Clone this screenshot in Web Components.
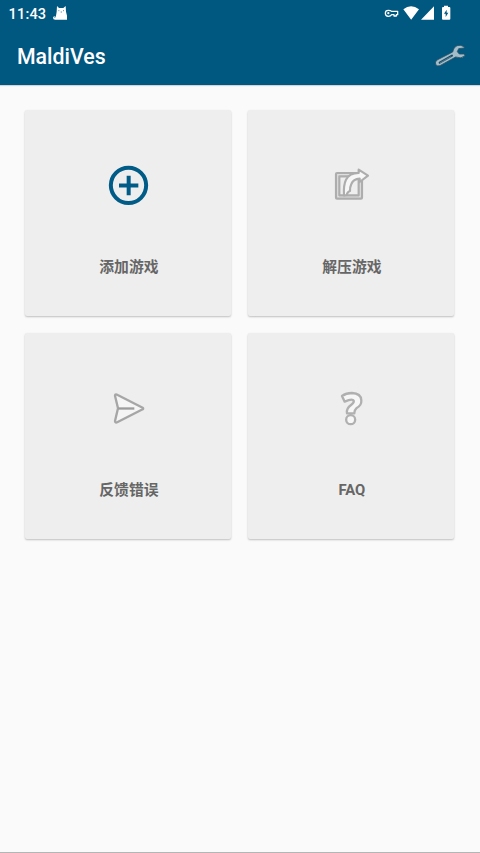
<!DOCTYPE html>
<html lang="zh-CN"><head><meta charset="utf-8"><title>MaldiVes</title>
<style>html,body{margin:0;height:100%;background:#fafafa}</style></head>
<body><maldives-app></maldives-app>
<script>
const define = (name, html) => {
  const t = document.createElement('template');
  t.innerHTML = html;
  customElements.define(name, class extends HTMLElement {
    constructor() {
      super();
      this.attachShadow({mode: 'open'}).append(t.content.cloneNode(true));
    }
  });
};

define('status-bar', `
<style>
:host{display:flex;align-items:center;height:27px;padding:0 28px 0 8.5px;box-sizing:border-box;color:#fff;font:500 14.5px/27px Roboto,sans-serif}
svg{display:block;flex:none}
.cat{margin-left:6px}
.right{margin-left:auto}
span{letter-spacing:.2px;padding-top:1px}
</style>
<span>11:43</span>
<svg class="cat" width="16" height="27" viewBox="157 0 48 81"><path fill="#fff" d="M172 18L178 24H191L198 18L199 35L202 47V59H169Q160 60 160 53Q161 48 166 48Q162 52 166 54L169 47L171 35Z"/><path stroke="#005780" stroke-width="2" d="M176 32h3M190 32h3M183 36h4"/></svg>
<svg class="right" width="68" height="27" viewBox="42 0 204 81">
<g fill="none" stroke="#fff" stroke-width="3.8" stroke-linejoin="round"><path d="M65 34H83V44H79V48H72V44H65Q62 49 55 49Q46 48 46 39.500Q46 31 55 31Q62 31 65 34Z"/></g><circle cx="55" cy="39.500" r="3.400" fill="#fff"/>
<path fill="#fff" d="M100 28Q123 10 147 28L123.500 59ZM153 59L192 19V59Z"/>
<path fill="#fff" fill-rule="evenodd" d="M222 17H234V21H238Q241 21 241 24V56Q241 59 238 59H219Q216 59 216 56V24Q216 21 219 21H222ZM230 29L222 41H227V51L235 38H230Z"/>
</svg>`);

define('app-toolbar', `
<style>
:host{display:flex;align-items:center;justify-content:space-between;height:58px;padding:0 7px 0 17px;box-sizing:border-box;color:#fff;font:500 21.3px/58px Roboto,sans-serif}
svg{display:block}
.title{padding-top:1px;line-height:57px}
</style>
<div class="title"><slot></slot></div>
<svg width="40" height="58" viewBox="190 81 120 174">
<path fill="#a4bdca" stroke="#294f61" stroke-width="2.500" stroke-linejoin="round" d="M284 141Q274 133 262 137Q251 142 249 156L202 180Q195 186 198 193Q201 200 211 197L258 171Q275 178 286 167L284 162H269L263 155L267 146L284 144Z"/>
<path fill="none" stroke="#174c66" stroke-width="6" stroke-linecap="round" d="M210 188L247 167"/><path fill="none" stroke="#718e9b" stroke-width="2" stroke-linecap="round" d="M212 188L244 170"/>
</svg>`);

define('action-card', `
<style>
:host{display:flex;flex-direction:column;align-items:center;height:206px;padding-top:50px;box-sizing:border-box;background:#eee;border-radius:2px;box-shadow:0 1px 2px rgba(0,0,0,.24);color:#666;font:700 14.8px/20px Roboto,"Noto Sans CJK SC",sans-serif}
.icon{height:50px}
.label{margin-top:47px;padding-left:1px}
</style>
<div class="icon"><slot name="icon"></slot></div><div class="label"><slot></slot></div>`);

define('action-icon-add', `
<style>:host,svg{display:block}</style>
<svg width="60" height="50" viewBox="0 0 180 150"><g fill="none" stroke="#005c87"><circle cx="91.500" cy="76" r="53" stroke-width="12"/><path stroke-width="12" d="M63 76.500H121M92 47V106"/></g></svg>`);

define('action-icon-extract', `
<style>:host,svg{display:block}</style>
<svg width="60" height="50" viewBox="3 0 180 150"><g stroke="#adadad" stroke-width="6.500" stroke-linejoin="round"><rect x="48" y="39" width="78" height="77" rx="3" fill="#dedede"/><rect x="58" y="49" width="58" height="57" fill="#eee"/><path fill="#f7f7f7" d="M72 106Q70 75 78 59Q88 39 116 39V29L144 47L119 66V56Q100 57 94 72Q89 83 90 93Q83 94 80 105Z"/></g></svg>`);

define('action-icon-send', `
<style>:host,svg{display:block}</style>
<svg width="60" height="50" viewBox="0 -3 180 150"><path fill="#f5f5f5" stroke="#a6a6a6" stroke-width="7" stroke-linejoin="round" d="M52 32Q54 30 59 33L134 71Q137 73 134 76L59 114Q51 118 51 111L60 73L51 35Z"/><path stroke="#9c9c9c" stroke-width="7" d="M61 73.500H109"/></svg>`);

define('action-icon-help', `
<style>:host,svg{display:block}</style>
<svg width="60" height="50" viewBox="3 -3 180 150"><g fill="#f7f7f7" stroke="#b0b0b0" stroke-width="7" stroke-linejoin="round"><path d="M66 36Q78 27 96 27Q123 28 124 49Q125 64 109 73Q103 78 103 88H81Q78 73 94 62Q103 56 101 50Q97 43 74 53Z"/><circle cx="92" cy="107" r="13.500"/></g></svg>`);

define('maldives-app', `
<style>
:host{display:flex;flex-direction:column;height:853px;box-sizing:border-box;background:#fafafa;border-bottom:1px solid #b5b5b5}
header{background:#005780;box-shadow:0 1px 1px rgba(0,0,0,.15)}
main{display:grid;grid-template-columns:206px 206px;gap:17px;padding:25px 25.400px}
</style>
<header><status-bar></status-bar><app-toolbar>MaldiVes</app-toolbar></header>
<main>
<action-card><action-icon-add slot="icon"></action-icon-add>添加游戏</action-card>
<action-card><action-icon-extract slot="icon"></action-icon-extract>解压游戏</action-card>
<action-card><action-icon-send slot="icon"></action-icon-send>反馈错误</action-card>
<action-card><action-icon-help slot="icon"></action-icon-help>FAQ</action-card>
</main>`);
</script></body></html>
